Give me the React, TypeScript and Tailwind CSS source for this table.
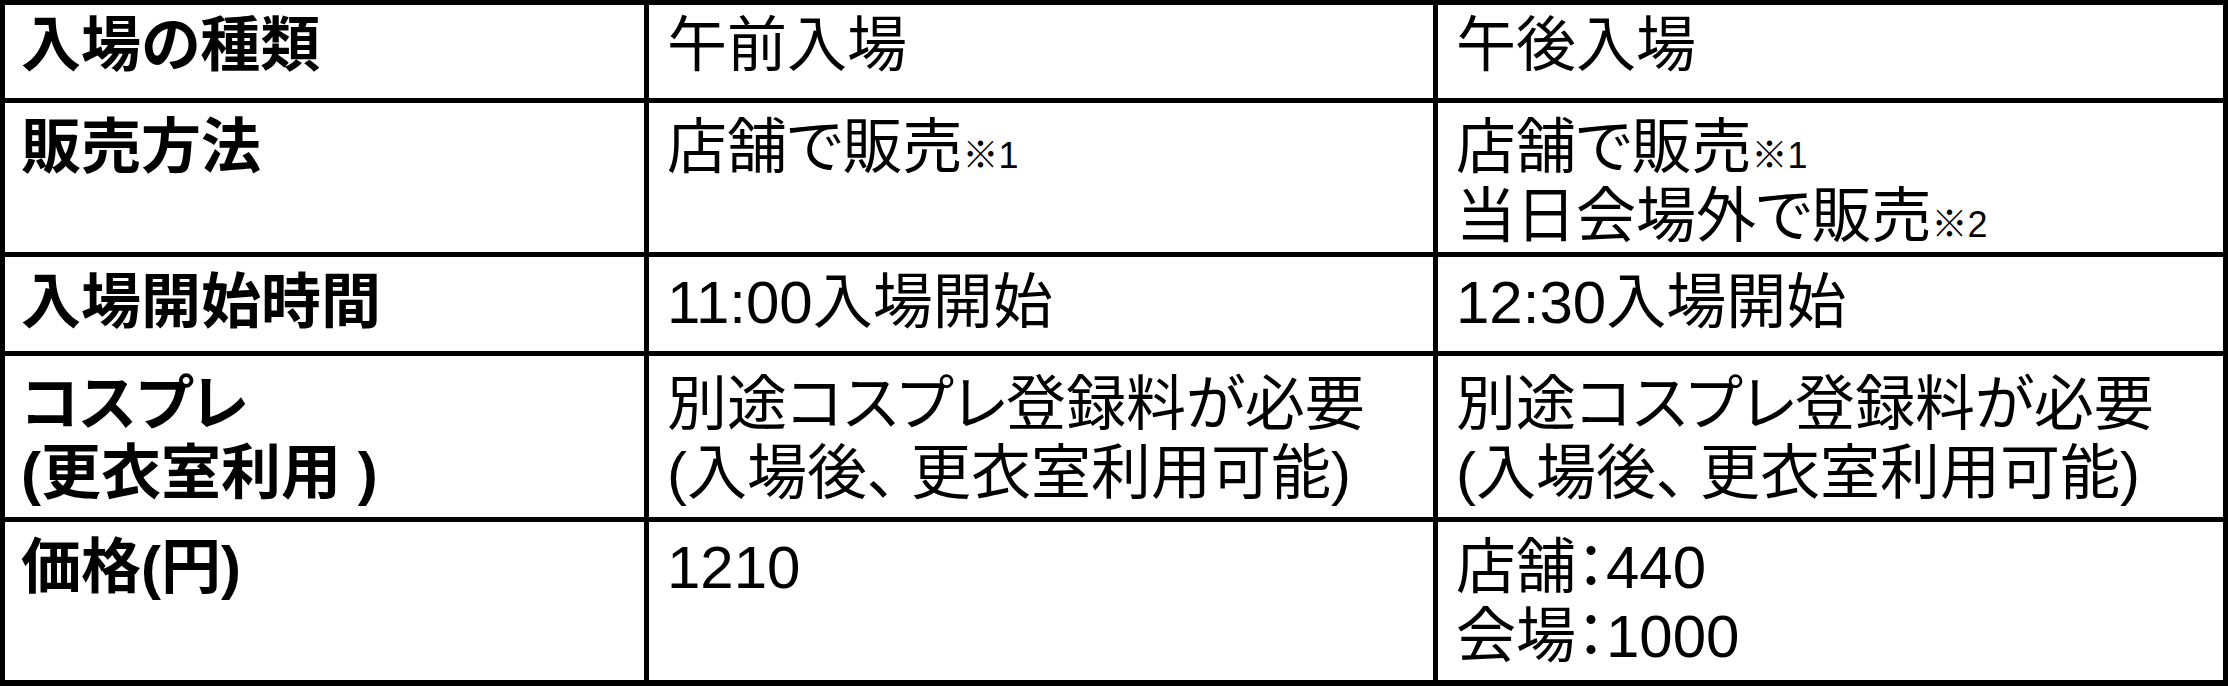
import type { FC, ReactNode } from "react";

type Row = {
  label: ReactNode;
  am: ReactNode;
  pm: ReactNode;
  pad: string;
};

const Note: FC<{ n: string }> = ({ n }) => <span className="text-[36px] leading-none">※{n}</span>;

const Cosplay = () => (
  <>
    別途コスプレ登録料が必要
    <br />
    (入場後<span className="mr-[14px]">、</span>更衣室利用可能)
  </>
);

const rows: Row[] = [
  { label: "入場の種類", am: "午前入場", pm: "午後入場", pad: "pt-[6px]" },
  {
    label: "販売方法",
    am: (
      <>
        店舗で販売
        <Note n="1" />
      </>
    ),
    pm: (
      <>
        店舗で販売
        <Note n="1" />
        <br />
        当日会場外で販売
        <Note n="2" />
      </>
    ),
    pad: "pt-[10px]",
  },
  { label: "入場開始時間", am: "11:00入場開始", pm: "12:30入場開始", pad: "pt-[11px]" },
  {
    label: (
      <>
        コスプレ
        <br />
        (更衣室利用 )
      </>
    ),
    am: <Cosplay />,
    pm: <Cosplay />,
    pad: "pt-[14px]",
  },
  {
    label: "価格(円)",
    am: "1210",
    pm: (
      <>
        店舗：440
        <br />
        会場：1000
      </>
    ),
    pad: "pt-[11px]",
  },
];

export default function App() {
  return (
    <div
      className="grid h-[686px] w-[2228px] grid-cols-[639px_784px_785px] grid-rows-[93px_149px_94px_161px_158px] gap-[5px] bg-black pt-[5px] pr-[5px] pb-[6px] pl-[5px] text-[60px] leading-[69px] text-black [font-feature-settings:'palt']"
      style={{ fontFamily: '"Liberation Sans", "Noto Sans CJK JP", sans-serif' }}
    >
      {rows.map((row, i) => (
        <div key={i} className="contents">
          <div className={`bg-white pl-[16px] font-bold ${row.pad}`}>{row.label}</div>
          <div className={`bg-white pl-[18px] ${row.pad}`}>{row.am}</div>
          <div className={`bg-white pl-[18px] ${row.pad}`}>{row.pm}</div>
        </div>
      ))}
    </div>
  );
}
